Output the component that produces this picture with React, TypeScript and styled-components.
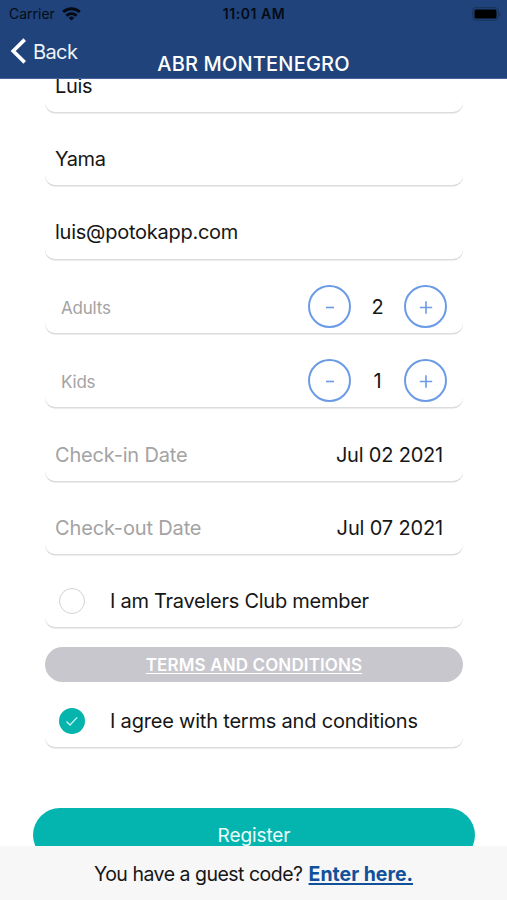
import React from "react";
import styled, { createGlobalStyle } from "styled-components";

const GlobalStyle = createGlobalStyle`
  * { box-sizing: border-box; }
  body { margin: 0; background: #fff; }
  #root { height: 100vh; }
`;

const Screen = styled.div`
  display: flex;
  flex-direction: column;
  width: 507px;
  height: 900px;
  overflow: hidden;
  background: #fff;
  color: #161616;
  font-family: Inter, "Liberation Sans", sans-serif;
  font-size: 20px;
`;

const Header = styled.header`
  flex: none;
  height: 79px;
  background: #1f437a;
  border-bottom: 1px solid #45659a;
  overflow: hidden;
`;

const StatusBar = styled.div`
  display: grid;
  grid-template-columns: 1fr auto 1fr;
  align-items: center;
  height: 27px;
  padding: 0 6px 0 9px;
  color: #060b16;
  font-size: 14px;
`;

const Carrier = styled.div`
  display: flex;
  align-items: center;
  gap: 7px;
`;

const Clock = styled.div`
  font-weight: 600;
  letter-spacing: 0.55px;
  margin: 0 1px 0 -1px;
`;

const Battery = styled.svg`
  justify-self: end;
`;

const NavBar = styled.div`
  display: grid;
  grid-template-columns: 1fr auto 1fr;
  height: 51px;
  padding: 0 10px;
  color: #fff;
`;

const BackButton = styled.div`
  display: flex;
  gap: 6px;
  height: 48px;
  align-items: center;
  letter-spacing: -0.6px;
  color: #eef3fb;

  span {
    padding-top: 2px;
  }
`;

const Title = styled.div`
  font-size: 20px;
  font-weight: 500;
  line-height: 24px;
  padding-top: 25px;
  letter-spacing: 0.18px;
`;

const Content = styled.main`
  flex: 1;
  min-height: 0;
  overflow: hidden;
  display: flex;
  flex-direction: column;
  padding: 0 44px 0 45px;
`;

const Card = styled.div<{ $gap?: number; $first?: boolean }>`
  flex: none;
  display: flex;
  align-items: center;
  justify-content: space-between;
  height: 54px;
  margin-top: ${(p) => (p.$first ? -21 : p.$gap ?? 20)}px;
  padding: 2px 20px 0 10px;
  border-radius: 10px;
  background: #fff;
  box-shadow: 0 1.5px 0.5px #dcdcdc;
`;

const CounterCard = styled(Card)`
  padding-top: 0;
`;

const EmailCard = styled(Card)`
  padding-top: 0;
`;

const Text = styled.span<{ $track?: number }>`
  letter-spacing: ${(p) => p.$track ?? 0}px;
  white-space: nowrap;
`;

const Placeholder = styled(Text)`
  color: #a3a3a3;
`;

const CounterLabel = styled(Placeholder)`
  padding: 4px 0 0 6px;
  font-size: 17px;
`;

const Stepper = styled.div`
  display: grid;
  grid-template-columns: 43px 53px 43px;
  align-items: center;
  margin-right: -4px;
  text-align: center;
`;

const StepButton = styled.div`
  display: grid;
  place-items: center;
  width: 43px;
  height: 43px;
  border: 2px solid #6c9be6;
  border-radius: 50%;
  color: #6c9be6;
`;

const Count = styled.span`
  padding-top: 2px;
  font-size: 20px;
`;

const CheckCard = styled(Card)`
  justify-content: flex-start;
  gap: 25px;
  padding-left: 14px;
`;

const Radio = styled.span<{ $checked?: boolean }>`
  display: grid;
  place-items: center;
  width: 26px;
  height: 26px;
  border-radius: 50%;
  border: ${(p) => (p.$checked ? "none" : "1.5px solid #d2d2d2")};
  background: ${(p) => (p.$checked ? "#04b4ad" : "#fff")};
`;

const TermsButton = styled.div`
  flex: none;
  height: 35px;
  margin-top: 20px;
  border-radius: 18px;
  background: #c8c7cd;
  color: #fff;
  font-size: 17px;
  font-weight: 600;
  line-height: 36px;
  text-align: center;
  text-decoration: underline;
  text-decoration-thickness: 1px;
  text-underline-offset: 2px;
`;

const RegisterButton = styled.div`
  flex: none;
  height: 54px;
  margin: 61px -12px 0 -12px;
  border-radius: 27px;
  background: #03b5ae;
  color: #e9fbfa;
  font-size: 19px;
  line-height: 56px;
  letter-spacing: -0.1px;
  text-align: center;
`;

const Footer = styled.footer`
  flex: none;
  display: flex;
  justify-content: center;
  align-items: center;
  gap: 6px;
  height: 54px;
  padding-top: 2px;
  background: #f7f7f7;
  font-size: 19.5px;
`;

const GuestLink = styled(Text)`
  color: #11509a;
  font-weight: 700;
  text-decoration: underline;
  text-decoration-thickness: 2px;
  text-underline-offset: 2px;
`;

function Counter({ label, value, gap }: { label: string; value: number; gap: number }) {
  return (
    <CounterCard $gap={gap}>
      <CounterLabel $track={-0.2}>{label}</CounterLabel>
      <Stepper>
        <StepButton>
          <svg width="16" height="16" viewBox="0 0 16 16" stroke="currentColor" strokeWidth="1.6">
            <path d="M4 9.5h8" />
          </svg>
        </StepButton>
        <Count>{value}</Count>
        <StepButton>
          <svg width="16" height="16" viewBox="0 0 16 16" stroke="currentColor" strokeWidth="1.6">
            <path d="M1.8 9.5h12.4M8 3.3v12.4" />
          </svg>
        </StepButton>
      </Stepper>
    </CounterCard>
  );
}

export default function App() {
  return (
    <>
      <GlobalStyle />
      <Screen>
        <Header>
          <StatusBar>
            <Carrier>
              <span>Carrier</span>
              <svg width="19" height="14" viewBox="0 0 19 14" fill="none" stroke="#050a14" strokeWidth="2.8">
                <path d="M1.2 5.1a12 12 0 0 1 16.6 0M4.4 8.7a7.4 7.4 0 0 1 10.2 0" />
                <path d="M9.5 13.6 6.8 10.9a3.9 3.9 0 0 1 5.4 0z" fill="#050a14" stroke="none" />
              </svg>
            </Carrier>
            <Clock>11:01 AM</Clock>
            <Battery width="29" height="14" viewBox="0 0 29 14">
              <rect x="0.7" y="0.7" width="25.6" height="12.6" rx="3.6" fill="none" stroke="#19365f" strokeWidth="1.2" />
              <rect x="2.5" y="2.5" width="22" height="9" rx="1.5" fill="#000" />
              <path d="M27.4 4.8a2.4 2.4 0 0 1 0 4.4z" fill="#19365f" />
            </Battery>
          </StatusBar>
          <NavBar>
            <BackButton>
              <svg width="17" height="26" viewBox="0 0 17 26" fill="none" stroke="#fff" strokeWidth="3.6">
                <path d="M14.7 1.6 3.2 13l11.5 11.4" />
              </svg>
              <span>Back</span>
            </BackButton>
            <Title>ABR MONTENEGRO</Title>
          </NavBar>
        </Header>
        <Content>
          <Card $first><Text $track={-0.3}>Luis</Text></Card>
          <Card $gap={19}><Text $track={-0.4}>Yama</Text></Card>
          <EmailCard $gap={20}><Text $track={-0.25}>luis@potokapp.com</Text></EmailCard>
          <Counter label="Adults" value={2} gap={20} />
          <Counter label="Kids" value={1} gap={20} />
          <Card $gap={20}>
            <Placeholder $track={-0.18}>Check-in Date</Placeholder>
            <Text $track={-0.2}>Jul 02 2021</Text>
          </Card>
          <Card $gap={19}>
            <Placeholder $track={-0.15}>Check-out Date</Placeholder>
            <Text $track={-0.15}>Jul 07 2021</Text>
          </Card>
          <CheckCard $gap={19}>
            <Radio />
            <Text $track={-0.26}>I am Travelers Club member</Text>
          </CheckCard>
          <TermsButton><Text $track={0.13}>TERMS AND CONDITIONS</Text></TermsButton>
          <CheckCard $gap={11}>
            <Radio $checked>
              <svg width="14" height="12" viewBox="0 0 14 12" fill="none" stroke="#c9f5f1" strokeWidth="1.3">
                <path d="M1.5 6.5 5 10l7.2-7.6" />
              </svg>
            </Radio>
            <Text $track={-0.2}>I agree with terms and conditions</Text>
          </CheckCard>
          <RegisterButton>Register</RegisterButton>
        </Content>
        <Footer>
          <Text $track={-0.5}>You have a guest code?</Text>
          <GuestLink>Enter here.</GuestLink>
        </Footer>
      </Screen>
    </>
  );
}
